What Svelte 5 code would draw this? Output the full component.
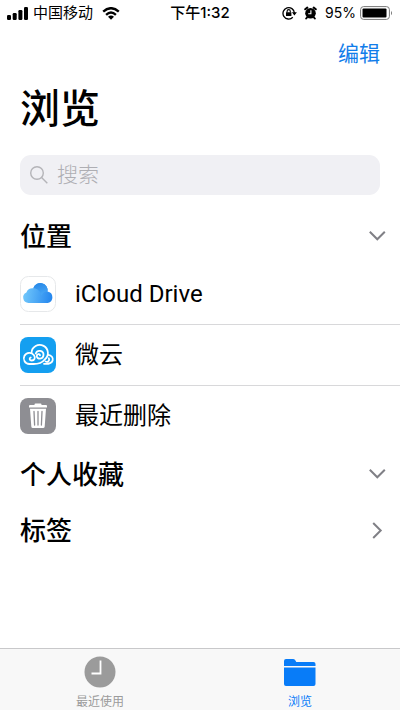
<script lang="ts">
  let query = $state('');
  let open = $state({ places: true, favorites: false, tags: false });
  let tab = $state('browse');

  const places = [
    { id: 'icloud', name: 'iCloud Drive' },
    { id: 'weiyun', name: '微云' },
    { id: 'trash', name: '最近删除' }
  ];
</script>

{#snippet chevron(down: boolean)}
  <svg class="chevron" width="18" height="18" viewBox="0 0 18 18" aria-hidden="true">
    <path d={down ? 'M1.8 3.8 9.3 11.300l7.500-7.500' : 'M5.2 1 12.700 8.500l-7.500 7.500'} />
  </svg>
{/snippet}

{#snippet placeIcon(id: string)}
  <svg class="place-icon" width="36" height="36" viewBox="0 0 36 36" aria-hidden="true">
    {#if id === 'icloud'}
      <defs>
        <linearGradient id="cloud" x1="0" y1="0.5" x2="1" y2="0.6">
          <stop offset="0" stop-color="#72c8fb" />
          <stop offset="1" stop-color="#2486ee" />
        </linearGradient>
        <linearGradient id="puff" x1="0" y1="0" x2="0.3" y2="1">
          <stop offset="0" stop-color="#2585e6" />
          <stop offset="1" stop-color="#45a5f5" />
        </linearGradient>
      </defs>
      <rect x="0.5" y="0.5" width="35" height="35" rx="8" fill="#fff" stroke="#e6e8ea" />
      <path fill="url(#cloud)" d="M8.500 27A5.500 5.500 0 0 1 6.400 16.500A6 6 0 0 1 13.300 12.300A7.300 7.300 0 0 1 27.500 15.600A5.800 5.800 0 0 1 27.800 27Z" />
      <path fill="url(#puff)" d="M13.300 12.300A7.300 7.300 0 0 1 27.500 15.600A6.500 6.500 0 0 0 21.500 19.500C20.500 15 17 12.300 13.300 12.300Z" />
    {:else if id === 'weiyun'}
      <rect width="36" height="36" rx="8" fill="#149ff0" />
      <g fill="none" stroke="#fff" stroke-width="1.8" stroke-linecap="round" stroke-linejoin="round">
        <path d="M11.500 15.700A8.200 8.200 0 1 1 24.500 22.700C22 26 17.500 27 13.500 27" />
        <path d="M13.500 27H9.300A5.600 5.600 0 1 1 14 18.200C15.800 20.800 14.400 23.500 11.700 23.500C9.400 23.500 9 21 10.700 20.500" />
        <path d="M15.800 16.500C17.300 12.300 23.700 13.500 23.500 18C23.300 22.500 17 22.700 16.800 19.200C16.700 17 19.800 16.400 20 18.400" />
        <path d="M28.200 17.800C31.500 18.200 33.300 20.700 32.700 23.200C32 26.200 29.500 27.200 24 26.900M28.800 21.300C30 23.500 28 25.500 25.500 24.500" />
      </g>
    {:else}
      <rect width="36" height="36" rx="8" fill="#8e8e93" />
      <path fill="#fff" d="M14.500 7V6.500Q14.500 5.500 15.500 5.500H20.500Q21.500 5.500 21.500 6.500V7H26Q27 7 27 8V9.500H9V8Q9 7 10 7ZM10 10.800H26L24.700 28.500Q24.600 30 23 30H13Q11.400 30 11.300 28.500Z" />
      <path fill="none" stroke="#8e8e93" stroke-width="1.3" stroke-linecap="round" d="M14 13.500 14.600 27M18 13.500V27M22 13.500 21.400 27" />
    {/if}
  </svg>
{/snippet}

<div class="screen">
  <div class="status">
    <div class="status-side">
      <svg width="21" height="13" viewBox="0 0 21 13" aria-hidden="true">
        <rect x="0" y="8" width="4" height="5" rx="1.200" />
        <rect x="5.700" y="6" width="4" height="7" rx="1.200" />
        <rect x="11.400" y="3" width="4" height="10" rx="1.200" />
        <rect x="17" y="0" width="4" height="13" rx="1.200" />
      </svg>
      <span class="carrier">中国移动</span>
      <svg class="wifi" width="18" height="13" viewBox="0 0 18 13" aria-hidden="true">
        <path fill="none" stroke="#000" stroke-width="2.400" d="M1.200 4.600Q9-2.200 16.800 4.600M4.100 7.800Q9 3.400 13.900 7.800" />
        <path d="M9 12.800 6 9.700Q9 7.500 12 9.700Z" />
      </svg>
    </div>
    <time>下午1:32</time>
    <div class="status-side end">
      <svg width="15" height="14" viewBox="0 0 15 14" aria-hidden="true">
        <path fill="none" stroke="#000" stroke-width="1.300" d="M10.800 11.300A5.700 5.700 0 1 1 12.400 7" />
        <path d="M9.900 6.200H14.900L12.400 9.400ZM4 6.200H9.400V10H4Z" />
        <path fill="none" stroke="#000" stroke-width="1.100" d="M5.100 6.500V5.200a1.600 1.600 0 0 1 3.200 0V6.500" />
      </svg>
      <svg class="alarm" width="13" height="14" viewBox="0 0 13 14" aria-hidden="true">
        <circle cx="6.500" cy="7.300" r="5.300" />
        <path fill="none" stroke="#000" stroke-width="2" stroke-linecap="round" d="M1.200 3.300 3.300 1.600M11.800 3.300 9.700 1.600M3 11.500 2.200 12.500M10 11.500 10.800 12.500" />
        <path fill="none" stroke="#fff" stroke-width="1.100" d="M6.900 4.300V7.800H4.200" />
      </svg>
      <span class="percent">95%</span>
      <svg width="33" height="14" viewBox="0 0 33 14" aria-hidden="true">
        <rect x="0.600" y="0.600" width="28.800" height="12.800" rx="3" fill="none" stroke="#777" />
        <rect x="2.500" y="2.500" width="24" height="9" rx="1" />
        <path fill="#777" d="M31 4.700Q33 7 31 9.300Z" />
      </svg>
    </div>
  </div>

  <header>
    <button class="edit">编辑</button>
    <h1>浏览</h1>
    <label class="search">
      <svg width="20" height="20" viewBox="0 0 20 20" aria-hidden="true">
        <circle cx="8" cy="8" r="6.300" />
        <path d="M12.600 12.600 18.300 18.300" />
      </svg>
      <input type="search" placeholder="搜索" aria-label="搜索" bind:value={query} />
    </label>
  </header>

  <main>
    <section>
      <h2>
        <button aria-expanded={open.places} onclick={() => (open.places = !open.places)}>
          位置 {@render chevron(open.places)}
        </button>
      </h2>
      {#if open.places}
        <ul>
          {#each places as place (place.id)}
            <li>
              <button>
                {@render placeIcon(place.id)}
                <span>{place.name}</span>
              </button>
            </li>
          {/each}
        </ul>
      {/if}
    </section>
    <section>
      <h2>
        <button onclick={() => (open.favorites = !open.favorites)}>
          个人收藏 {@render chevron(!open.favorites)}
        </button>
      </h2>
    </section>
    <section>
      <h2>
        <button aria-expanded={open.tags} onclick={() => (open.tags = !open.tags)}>
          标签 {@render chevron(open.tags)}
        </button>
      </h2>
    </section>
  </main>

  <nav>
    <button class:active={tab === 'recent'} onclick={() => (tab = 'recent')}>
      <svg width="32" height="32" viewBox="0 0 32 32" aria-hidden="true">
        <circle cx="16" cy="16" r="15.500" fill="currentColor" />
        <path fill="none" stroke="#fff" stroke-width="1.800" d="M16.500 4.500V17.500H7.500" />
      </svg>
      <span>最近使用</span>
    </button>
    <button class:active={tab === 'browse'} onclick={() => (tab = 'browse')}>
      <svg width="32" height="32" viewBox="0 0 32 32" aria-hidden="true">
        <path fill="currentColor" d="M0 10V5Q0 3 2 3H9Q10.300 3 11.100 4L12.300 6H29.500Q31.500 6 31.500 8V10ZM0 11.500H31.500V28Q31.500 30 29.500 30H2Q0 30 0 28Z" />
      </svg>
      <span>浏览</span>
    </button>
  </nav>
</div>

<style>
  :global(body) {
    margin: 0;
    background: #fff;
  }
  .screen {
    min-height: 100vh;
    display: flex;
    flex-direction: column;
    color: #000;
    font-family: Inter, "Noto Sans CJK SC", sans-serif;
  }
  svg { display: block; flex-shrink: 0; }
  button {
    padding: 0;
    border: 0;
    background: none;
    color: inherit;
    font: inherit;
    cursor: pointer;
  }

  .status {
    display: grid;
    grid-template-columns: 1fr auto 1fr;
    align-items: center;
    height: 26px;
    padding: 0 7px;
    font-size: 15px;
    line-height: 26px;
  }
  .status-side { display: flex; align-items: center; }
  .end { justify-content: flex-end; }
  .carrier { margin: 0 9px 0 5px; }
  .alarm { margin: 0 8px 0 7px; }
  .percent { margin-right: 4px; font-size: 14px; }
  time { font-weight: 500; }

  header {
    display: flex;
    flex-direction: column;
    padding: 13px 20px 0;
  }
  .edit {
    align-self: flex-end;
    color: #117dea;
    font-size: 21px;
    line-height: 30px;
  }
  h1 {
    margin: 10px 0 16px;
    font-size: 40px;
    font-weight: 500;
    line-height: 60px;
  }
  .search {
    display: flex;
    align-items: center;
    gap: 8px;
    height: 40px;
    padding: 0 9px;
    border-radius: 11px;
    background: #f0f0f4;
  }
  .search svg {
    fill: none;
    stroke: #b4b4b8;
    stroke-width: 1.4;
  }
  input {
    flex: 1;
    min-width: 0;
    padding: 0;
    border: 0;
    outline: 0;
    background: none;
    color: #000;
    font: inherit;
    font-size: 21px;
    line-height: 30px;
    appearance: none;
  }
  input::placeholder { color: #aeaeb3; font-weight: 300; }

  main { flex: 1; padding: 13px 0 16px 20px; }
  h2 {
    margin: 0;
    padding-top: 2px;
    font-size: 26px;
    font-weight: 500;
    line-height: 54px;
  }
  h2 button {
    display: flex;
    align-items: center;
    justify-content: space-between;
    width: 100%;
    padding-right: 14px;
    text-align: left;
  }
  .chevron {
    fill: none;
    stroke: #808086;
    stroke-width: 2;
  }
  ul { margin: 0; padding: 0; list-style: none; }
  li + li { border-top: 1px solid #d8d8da; }
  li button {
    display: flex;
    align-items: center;
    gap: 19px;
    width: 100%;
    height: 60px;
    font-family: Roboto, "Noto Sans CJK SC", sans-serif;
    font-size: 24px;
    line-height: 32px;
    text-align: left;
  }

  nav {
    display: flex;
    height: 61px;
    border-top: 1px solid #c8c8ca;
    background: #f8f8f8;
  }
  nav button {
    flex: 1;
    display: flex;
    flex-direction: column;
    align-items: center;
    gap: 4px;
    padding-top: 7px;
    color: #9b9b9b;
    font-size: 12px;
    line-height: 20px;
  }
  nav .active { color: #087cf8; }
</style>
